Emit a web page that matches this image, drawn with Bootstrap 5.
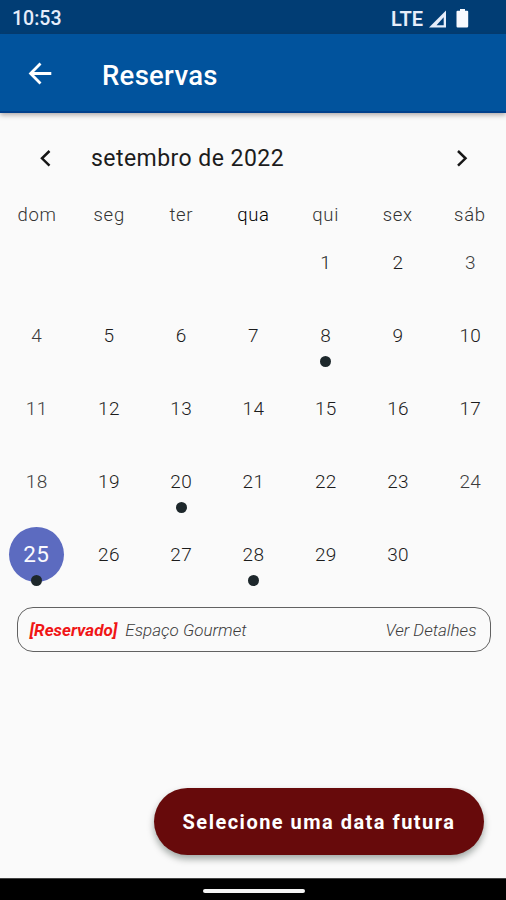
<!DOCTYPE html>
<html lang="pt-BR">
<head>
<meta charset="utf-8">
<meta name="viewport" content="width=device-width, initial-scale=1">
<title>Reservas</title>
<link href="https://cdn.jsdelivr.net/npm/bootstrap@5.3.0/dist/css/bootstrap.min.css" rel="stylesheet">
<style>
body{font-family:Roboto,"Liberation Sans",sans-serif;background:#fafafa;color:#1c1c1c;width:506px;height:900px;overflow:hidden;line-height:1}
.status{height:34px;background:#013d74;font-size:19.5px;font-weight:500;padding:3px 37px 0 12px;color:#e6edfa}
.lte{font-size:20px;font-weight:600;letter-spacing:0;margin-right:5px}
.appbar{height:79px;background:#01539d;border-bottom:2px solid #013f8b;box-shadow:0 2px 5px rgba(60,40,40,.4);padding:2px 0 0 28px;gap:50px;position:relative}
.appbar h1{font-size:27.5px;font-weight:500;letter-spacing:.3px;padding-top:3px}
.month{height:89px;padding:0 36px 0 37px}
.month h2{font-size:23px;font-weight:400;letter-spacing:.45px;margin-left:37px;padding-top:2px}
.week{display:grid;grid-template-columns:repeat(7,1fr)}
.names{height:24px;font-size:18.5px;letter-spacing:.7px;color:#333;font-weight:300;padding:2px 0 0 1px}
.day{height:73px;font-size:19px;letter-spacing:.35px;font-weight:300;position:relative;padding-left:1px}
.dark{color:#000}
.soft{color:#3c3c3c}
.picked{width:55px;height:55px;background:#5c6bc0;color:#fafafe;font-size:22.5px;font-weight:400;margin-left:-1px}
.dot{position:absolute;left:50%;margin-left:-5px;top:56.5px;width:11px;height:11px;background:#1d272b}
.entry{height:45px;margin:16px 15.5px 0 17px;border:1.3px solid #626262;border-radius:16px;padding:2px 13px 0 11.5px;font-style:italic;font-weight:300;font-size:17px;color:#3c3c3c}
.entry b{color:#f01616;font-weight:700}
.cta{width:330px;height:67px;background:#670a0b;color:#fff;font-size:20px;font-weight:700;letter-spacing:1.48px;margin-right:22px;margin-bottom:23px;box-shadow:0 4px 7px rgba(0,20,10,.36)}
.navstrip{height:22px;background:#000;border-top:1px solid #444;padding:2px 0 0 1px}
.handle{width:102px;height:4px;background:#f4f4f4}
</style>
</head>
<body class="d-flex flex-column">
<div class="status d-flex align-items-center">
  <span>10:53</span>
  <span class="lte ms-auto">LTE</span>
  <svg width="20" height="18" viewBox="0 0 20 18"><path d="M1 17.500 18 .500v17z" fill="#e6edfa"/><path d="M8.500 15.300 15.700 7.300v8z" fill="#013d74"/></svg>
  <svg class="ms-2" width="13" height="19" viewBox="0 0 13 19"><path d="M4 0h5v1.800h2.200q1 0 1 1v14.500q0 1.200-1.200 1.200H1.700Q.500 18.500.500 17.300V2.800q0-1 1-1H4z" fill="#f8faff"/></svg>
</div>
<header class="appbar d-flex align-items-center text-white">
  <svg width="24" height="24" viewBox="0 0 24 24" fill="none" stroke="#fff" stroke-width="2.800"><path d="M23.300 11.500H2.500M12.500 1.600 2.600 11.500 12.500 21.400"/></svg>
  <h1 class="mb-0">Reservas</h1>
</header>
<div class="month d-flex align-items-center">
  <svg width="17" height="20" viewBox="0 0 17 20" fill="none" stroke="#161616" stroke-width="2.500"><path d="M12.500 3 5 10.300l7.500 7.300"/></svg>
  <h2 class="mb-0">setembro de 2022</h2>
  <svg class="ms-auto" width="17" height="20" viewBox="0 0 17 20" fill="none" stroke="#161616" stroke-width="2.500"><path d="m5 3 7.500 7.300L5 17.600"/></svg>
</div>
<main>
<div class="week names text-center align-items-center"><span>dom</span><span>seg</span><span>ter</span><span class="dark">qua</span><span>qui</span><span>sex</span><span>sáb</span></div>
<div class="week" id="days"></div>
</main>
<div class="entry d-flex align-items-center"><b>[Reservado]</b><span class="ms-2">Espaço Gourmet</span><span class="ms-auto">Ver Detalhes</span></div>
<button class="cta btn rounded-pill border-0 mt-auto align-self-end p-0">Selecione uma data futura</button>
<footer class="navstrip d-flex align-items-center justify-content-center"><div class="handle rounded-pill"></div></footer>
<script src="https://cdn.jsdelivr.net/npm/bootstrap@5.3.0/dist/js/bootstrap.bundle.min.js"></script>
<script>
const days=document.getElementById('days'),marked=[8,20,25,28],soft=[3,4,11,18,24];
for(let i=0;i<35;i++){
  const d=i-3,c=document.createElement('div');
  c.className='day d-flex align-items-center justify-content-center';
  if(d>0&&d<31){
    const n=document.createElement('span');
    n.textContent=d;
    if(d===25)n.className='picked rounded-circle d-flex align-items-center justify-content-center';
    if(soft.includes(d))n.className='soft';
    c.append(n);
    if(marked.includes(d)){const m=document.createElement('i');m.className='dot rounded-circle';c.append(m)}
  }
  days.append(c);
}
</script>
</body>
</html>
